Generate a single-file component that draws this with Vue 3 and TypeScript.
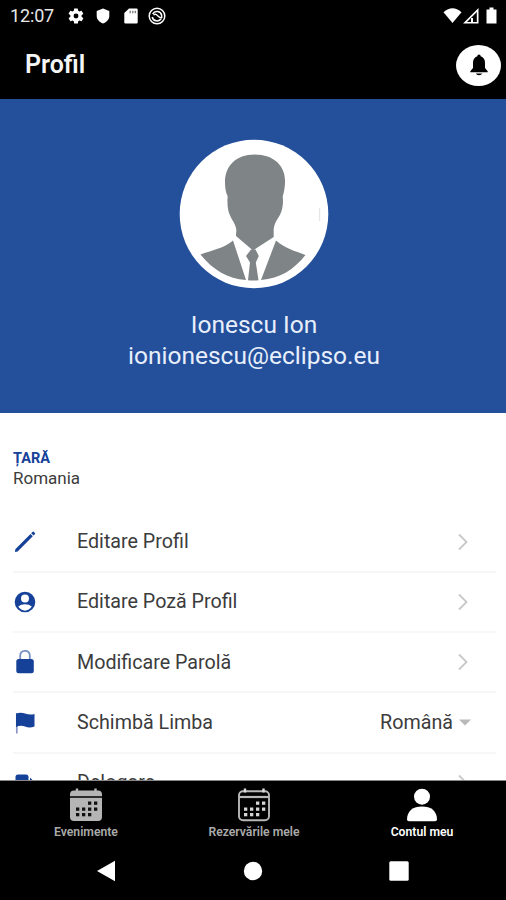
<script setup lang="ts">
type IconName = 'pencil' | 'person' | 'lock' | 'flag' | 'delegate'

interface MenuItem {
  icon: IconName
  label: string
  value?: string
}

interface Tab {
  icon: 'calendar' | 'calendar-outline' | 'user'
  label: string
  active: boolean
}

const items: MenuItem[] = [
  { icon: 'pencil', label: 'Editare Profil' },
  { icon: 'person', label: 'Editare Poză Profil' },
  { icon: 'lock', label: 'Modificare Parolă' },
  { icon: 'flag', label: 'Schimbă Limba', value: 'Română' },
  { icon: 'delegate', label: 'Delogare' },
]

const tabs: Tab[] = [
  { icon: 'calendar', label: 'Evenimente', active: false },
  { icon: 'calendar-outline', label: 'Rezervările mele', active: false },
  { icon: 'user', label: 'Contul meu', active: true },
]

const days: [number, number][] = [
  [20, 14], [26, 14],
  [8, 20], [14, 20], [20, 20], [26, 20],
  [8, 25.5], [14, 25.5], [20, 25.5],
]
</script>

<template>
  <div class="screen">
    <div class="status">
      <span class="clock">12:07</span>
      <svg class="gear" width="18" height="18" viewBox="0 0 24 24">
        <path fill="#fff" fill-rule="evenodd" d="M19.4 13c0-.3.1-.6.1-1s0-.7-.1-1l2.1-1.6c.2-.2.2-.4.1-.6l-2-3.5c-.1-.2-.4-.3-.6-.2l-2.500 1c-.5-.4-1.100-.7-1.700-1l-.4-2.600c0-.3-.2-.5-.5-.5h-4c-.3 0-.5.2-.5.5L9 5.100c-.6.3-1.200.6-1.700 1l-2.500-1c-.2-.1-.5 0-.6.2l-2 3.500c-.1.2-.1.4.1.6L4.500 11c0 .3-.1.600-.1 1s0 .7.1 1l-2.100 1.600c-.2.2-.2.4-.1.6l2 3.500c.1.2.4.3.6.2l2.500-1c.5.4 1.100.7 1.700 1l.4 2.600c0 .3.2.5.5.5h4c.3 0 .5-.2.5-.5l.4-2.600c.6-.3 1.200-.6 1.700-1l2.500 1c.2.100.5 0 .6-.2l2-3.500c.1-.2.1-.4-.1-.6L19.400 13zM12 15.300a3.300 3.300 0 1 1 0-6.600 3.300 3.300 0 0 1 0 6.600z" />
      </svg>
      <svg class="shield" width="14" height="16" viewBox="0 0 14 16">
        <path fill="#fff" d="M7 .5 13.300 3v5c0 3.500-2.700 6.200-6.300 7.500C3.400 14.200.7 11.500.7 8V3z" />
      </svg>
      <svg class="sd" width="14" height="16" viewBox="0 0 14 16">
        <path fill="#fff" d="M5 .5h7.500q1.200 0 1.200 1.200v12.600q0 1.200-1.200 1.200h-11Q.3 15.500.3 14.300V5z" />
        <path d="M6.200 2.800v2.400M8.800 2.800v2.400M11.300 2.800v2.400" stroke="#777" stroke-width="1.300" />
      </svg>
      <svg class="sync" width="18" height="18" viewBox="0 0 18 18" fill="none" stroke="#fff">
        <circle cx="9" cy="9" r="7.800" stroke-width="1.500" />
        <path d="M4.600 7A4.900 4.900 0 0 1 13.700 8.500V11M13.200 11.500A4.900 4.900 0 0 1 4.200 10M5.500 7.800q2.500-1.200 4 .8t4.200 2.300" stroke-width="1.500" />
      </svg>
      <span class="grow" />
      <svg class="signals" width="56" height="18" viewBox="0 0 56 18">
        <path fill="#fff" d="M.5 5.200Q9.500-2.500 18.500 5.200L9.500 16z" />
        <path fill="#fff" fill-rule="evenodd" d="M35.500 1v15.500H20zM33.800 5 24 14.900h4V11h2v3.900h3.800z" />
        <path fill="#fff" d="M46.500 .5h4v2h3v14H43.500v-14h3z" />
      </svg>
    </div>

    <header class="bar">
      <h1>Profil</h1>
      <button class="bell" aria-label="Notificări">
        <svg width="20" height="22" viewBox="0 0 20 22">
          <path fill="#000" d="M10 .5q1.700 0 1.700 1.800Q16 3.800 16 9v5l2.700 3.200v1H1.300v-1L4 14V9q0-5.200 4.300-6.700Q8.300.5 10 .5zM6.800 19.500h6.400q-.8 1.800-3.200 1.800t-3.200-1.800z" />
        </svg>
      </button>
    </header>

    <section class="hero">
      <svg class="avatar" width="150" height="150" viewBox="0 0 150 150">
        <circle cx="75" cy="75" r="74.300" fill="#fff" />
        <path fill="#7f8487" d="M75.500 15.500C96 15.500 107 28 106 44c-.2 5-1 9-2.300 13.500 1 8-.7 16-4 20.500-3 5-5.500 8-5 17.500v2.500L74 111.500 57 97c-.2-2 .7-4 .2-7-1-7-6.500-11-8-19-.8-4.300-1-9-.5-13.500C46.500 53 46 48 46 43c0-16 11-27.500 29.500-27.500z" />
        <path fill="#7f8487" d="M54 101.500C46 109 32 111.500 21.500 115.500 34 131 49 140 67 141zM97 101.500c8 7.500 19 10.500 29.500 14.500C115 130.500 101 139.500 82 141zM72 110.500h4.500l3.300 6.500-3 6.500 2.700 17.700q-5.500.5-10.500 0l2-17.700-4-6.500z" />
        <path d="M140.700 69v13" stroke="#e1e1e1" stroke-width="1" />
      </svg>
      <p class="name">Ionescu Ion</p>
      <p class="mail">ionionescu@eclipso.eu</p>
    </section>

    <main class="content">
      <div class="country">
        <h2>ȚARĂ</h2>
        <p>Romania</p>
      </div>
      <ul class="menu">
        <li v-for="item in items" :key="item.label">
          <svg class="icon" width="24" height="26" viewBox="0 0 24 26" fill="#154199">
            <path v-if="item.icon === 'pencil'" d="M2.300 20.300 17.500 5l2.300 2.300L4.600 22.500 2 23zM18.200 4.300l1.500-1.500q.5-.4 1 0l1.300 1.300q.4.500 0 1L20.500 6.600z" />
            <path v-else-if="item.icon === 'person'" fill-rule="evenodd" d="M12 2.700a10.300 10.300 0 1 1 0 20.600 10.300 10.300 0 0 1 0-20.600zm0 2.900a4 4 0 1 0 0 8 4 4 0 0 0 0-8zM5.200 17.600Q8 21.700 12 21.700t6.800-4.100Q16 15.200 12 15.200t-6.800 2.400z" />
            <template v-else-if="item.icon === 'lock'">
              <path d="M7.200 12V6.800q0-5 4.800-5t4.800 5V12" fill="none" stroke="#7790c5" stroke-width="1.800" />
              <rect x="3.300" y="10" width="17.500" height="14.300" rx="2.500" />
            </template>
            <template v-else-if="item.icon === 'flag'">
              <path d="M3.800 3v20.500" stroke="#8a94c8" stroke-width="1.700" />
              <path d="M3 3.800Q7 1.700 12 3.500t9.500.500v12.500q-5 1.800-9.500 0t-9 .5z" />
            </template>
            <template v-else>
              <rect x="2.500" y="4.500" width="13" height="17" rx="2.500" />
              <path d="M17 7.500 21.500 12 17 16.500z" />
            </template>
          </svg>
          <span class="label">{{ item.label }}</span>
          <span v-if="item.value" class="select">
            {{ item.value }}
            <svg width="12" height="7" viewBox="0 0 12 7"><path fill="#b9b9b9" d="M0 .5h12L6 6.500z" /></svg>
          </span>
          <svg v-else class="chevron" width="12" height="18" viewBox="0 0 12 18">
            <path d="M2 1.500 9.500 9 2 16.500" fill="none" stroke="#c8c8c8" stroke-width="1.800" />
          </svg>
        </li>
      </ul>
    </main>

    <nav class="tabs">
      <div v-for="tab in tabs" :key="tab.label" class="tab" :class="{ active: tab.active }">
        <svg v-if="tab.icon === 'user'" width="34" height="34" viewBox="0 0 34 34" fill="#fff">
          <circle cx="17" cy="8.700" r="8" />
          <path d="M2 31.500C2 23 8 18.500 17 18.500S32 23 32 31.500q0 1.800-2 1.800H4q-2 0-2-1.800z" />
        </svg>
        <svg v-else width="34" height="34" viewBox="0 0 34 34">
          <template v-if="tab.icon === 'calendar'">
            <path fill="#b5b5b5" d="M5 2.500h24q4 0 4 4V8.300H1V6.500q0-4 4-4zM1 9.700h32v19.300q0 4-4 4H5q-4 0-4-4z" />
            <path d="M8 .5v4M26.500.5v4" stroke="#b5b5b5" stroke-width="2.400" />
            <rect v-for="[x, y] in days" :key="`${x}-${y}`" :x="x - 1" :y="y - 0.5" width="3.300" height="3.300" fill="#111" />
          </template>
          <template v-else>
            <rect x="2" y="3.200" width="30" height="29" rx="4" fill="none" stroke="#b8b8b8" stroke-width="1.900" />
            <path d="M2 9h30" stroke="#b8b8b8" stroke-width="2.200" />
            <path d="M8 .5v4M26.500.5v4" stroke="#ddd" stroke-width="2.400" />
            <rect v-for="[x, y] in days" :key="`${x}-${y}`" :x="x - 1" :y="y - 0.5" width="3.300" height="3.300" fill="#d5d5d5" />
          </template>
        </svg>
        <span>{{ tab.label }}</span>
      </div>
    </nav>

    <div class="system">
      <svg width="20" height="22" viewBox="0 0 20 22"><path fill="#fff" d="M19 .8v20.400L1 11z" /></svg>
      <svg width="20" height="22" viewBox="0 0 20 22"><circle cx="10" cy="11" r="9.200" fill="#fff" /></svg>
      <svg width="20" height="22" viewBox="0 0 20 22"><rect x=".3" y="1.300" width="19.400" height="19.400" rx="1.500" fill="#fff" /></svg>
    </div>
  </div>
</template>

<style>
body {
  margin: 0;
  background: #000;
}
</style>

<style scoped>
.screen {
  width: 506px;
  height: 900px;
  display: flex;
  flex-direction: column;
  overflow: hidden;
  background: #000;
  font-family: Roboto, "Liberation Sans", sans-serif;
}
h1, h2, p, ul {
  margin: 0;
  padding: 0;
}
svg {
  display: block;
  flex: none;
}
.status {
  height: 31px;
  flex: none;
  display: flex;
  align-items: center;
  box-sizing: border-box;
  padding: 0 7px 0 10px;
  color: #e8e8e8;
}
.clock {
  width: 57px;
  font-size: 18px;
  line-height: 31px;
  letter-spacing: -0.15px;
}
.shield { margin-left: 11px; }
.sd { margin-left: 14px; }
.sync { margin-left: 10px; }
.grow { flex: 1; }
.signals { margin-right: 0; }
.bar {
  height: 68px;
  flex: none;
  display: flex;
  justify-content: space-between;
  align-items: center;
  box-sizing: border-box;
  padding: 0 5px 0 25px;
  color: #f5f5f5;
}
h1 {
  font-size: 25px;
  font-weight: 600;
  line-height: 28px;
}
.bell {
  display: grid;
  place-items: center;
  width: 45px;
  height: 41px;
  padding: 0;
  border: 0;
  border-radius: 50%;
  background: #fff;
}
.hero {
  height: 314px;
  flex: none;
  box-sizing: border-box;
  padding: 40px 0 0 2px;
  display: flex;
  flex-direction: column;
  align-items: center;
  background: #234f9b;
  color: #e8effb;
  font-size: 24.5px;
  line-height: 31px;
}
.avatar { margin-bottom: 20px; }
.content {
  flex: 1;
  min-height: 0;
  overflow: hidden;
  background: #fff;
  color: #3c3c3c;
}
.country {
  height: 99.500px;
  box-sizing: border-box;
  padding: 37px 13px 0;
}
h2 {
  color: #154199;
  font-size: 14.500px;
  font-weight: 700;
  line-height: 18px;
}
.country p {
  font-size: 17px;
  line-height: 20px;
}
.menu {
  list-style: none;
  padding: 0 10px 0 13px;
}
.menu li {
  height: 60.3px;
  box-sizing: border-box;
  display: flex;
  align-items: center;
  border-bottom: 2px solid #f7f7f7;
  font-size: 19.700px;
}
.icon { margin-right: 40px; }
.label { flex: 1; }
.chevron { margin-right: 27px; }
.select {
  display: flex;
  align-items: center;
  gap: 6px;
  margin-right: 25px;
}
.tabs {
  height: 65px;
  flex: none;
  display: grid;
  grid-template-columns: repeat(3, 1fr);
  box-sizing: border-box;
  padding: 7px 0 0 2px;
  border-top: 1px solid #888;
}
.tab {
  display: flex;
  flex-direction: column;
  align-items: center;
  gap: 2px;
  color: #aaa;
  font-size: 12.200px;
  font-weight: 600;
  line-height: 17px;
}
.active { color: #fff; }
.system {
  flex: none;
  height: 55px;
  display: flex;
  justify-content: space-between;
  align-items: center;
  box-sizing: border-box;
  padding: 0 97px 3px 96px;
}
</style>
